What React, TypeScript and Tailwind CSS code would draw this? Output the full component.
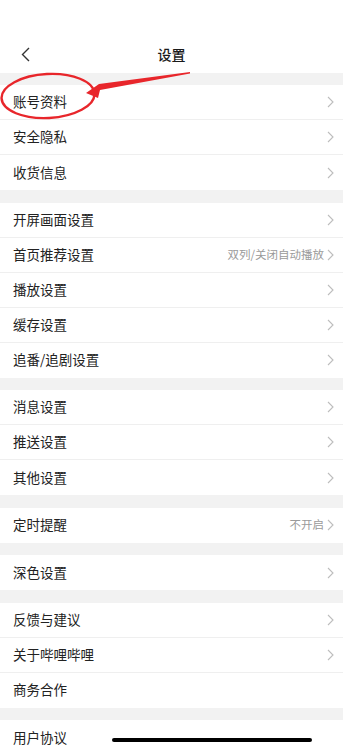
import React from "react";

type Row = { label: string; value?: string; arrow?: boolean };

const groups: Row[][] = [
  [
    { label: "账号资料", arrow: true },
    { label: "安全隐私", arrow: true },
    { label: "收货信息", arrow: true },
  ],
  [
    { label: "开屏画面设置", arrow: true },
    { label: "首页推荐设置", value: "双列/关闭自动播放", arrow: true },
    { label: "播放设置", arrow: true },
    { label: "缓存设置", arrow: true },
    { label: "追番/追剧设置", arrow: true },
  ],
  [
    { label: "消息设置", arrow: true },
    { label: "推送设置", arrow: true },
    { label: "其他设置", arrow: true },
  ],
  [{ label: "定时提醒", value: "不开启", arrow: true }],
  [{ label: "深色设置", arrow: true }],
  [
    { label: "反馈与建议", arrow: true },
    { label: "关于哔哩哔哩", arrow: true },
    { label: "商务合作" },
  ],
  [{ label: "用户协议" }],
];

function Chevron() {
  return (
    <svg width="7" height="12" viewBox="0 0 7 12" className="shrink-0">
      <path d="M1 1l5 5-5 5" fill="none" stroke="#bdbdbd" strokeWidth="1.1" />
    </svg>
  );
}

function SettingRow({ row, last }: { row: Row; last: boolean }) {
  return (
    <div
      className={
        "h-[35px] flex items-center pl-[13px] pr-[9px] bg-white" +
        (last ? "" : " border-b border-[#efefef]")
      }
    >
      <span className="flex-1 text-[13.5px] leading-none text-[#222222]">{row.label}</span>
      {row.value && (
        <span className="text-[11.5px] leading-none text-[#9a9a9a] mr-[3px]">{row.value}</span>
      )}
      {row.arrow && <Chevron />}
    </div>
  );
}

export default function App() {
  return (
    <div
      className="relative w-[343px] h-[746px] overflow-hidden bg-[#f2f2f2]"
      style={{ fontFamily: '"Noto Sans CJK SC", "Noto Sans", sans-serif' }}
    >
      {/* header */}
      <div className="bg-white h-[73px] pt-[36px]">
        <div className="relative h-[37px] flex items-center justify-center">
          <svg
            width="9"
            height="15"
            viewBox="0 0 9 15"
            className="absolute left-[21px] top-[11px]"
          >
            <path d="M8 1L1.5 7.5 8 14" fill="none" stroke="#333333" strokeWidth="1.4" />
          </svg>
          <span className="text-[14px] font-medium text-[#1a1a1a]">设置</span>
        </div>
      </div>

      <div className="flex flex-col">
        {groups.map((g, gi) => (
          <div key={gi} className={gi === 0 ? "pt-[12px]" : "pt-[12.5px]"}>
            {g.map((r, ri) => (
              <SettingRow key={r.label} row={r} last={ri === g.length - 1} />
            ))}
          </div>
        ))}
      </div>

      {/* red annotation */}
      <svg
        width="200"
        height="60"
        viewBox="0 0 200 60"
        className="absolute left-0 top-[65px] pointer-events-none"
      >
        <ellipse
          cx="48"
          cy="31"
          rx="46.5"
          ry="22"
          transform="rotate(-3 48 31)"
          fill="none"
          stroke="#e8262b"
          strokeWidth="2.4"
        />
        <polygon
          points="86,28 99,19 190,7 190,8.6 100,25 98,33"
          fill="#e8262b"
        />
      </svg>

      {/* home indicator */}
      <div className="absolute left-[112px] top-[738px] w-[200px] h-[4px] rounded-full bg-black" />
    </div>
  );
}
